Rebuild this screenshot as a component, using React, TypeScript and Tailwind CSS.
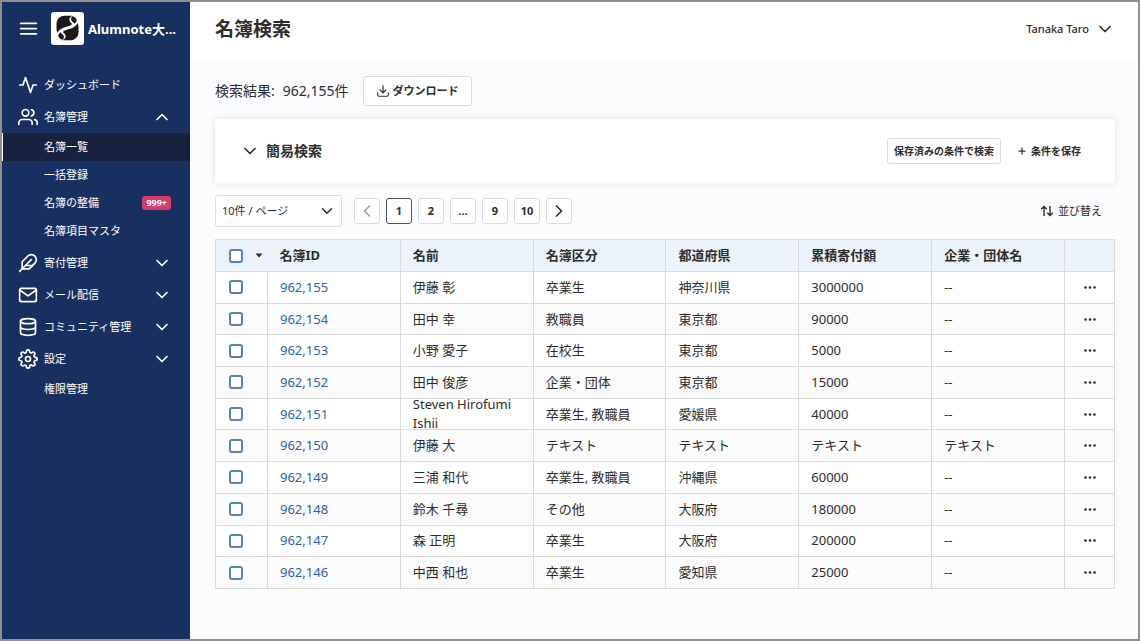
import type { ReactNode } from "react";
import {
  FiActivity,
  FiChevronDown,
  FiChevronLeft,
  FiChevronRight,
  FiChevronUp,
  FiDatabase,
  FiDownload,
  FiFeather,
  FiMail,
  FiMenu,
  FiPlus,
  FiSettings,
  FiUsers,
} from "react-icons/fi";
import type { IconType } from "react-icons";

interface SubItem {
  label: string;
  active?: boolean;
  badge?: string;
}

interface NavEntry {
  label: string;
  icon: IconType;
  chevron?: "up" | "down";
  children?: SubItem[];
}

const NAV: NavEntry[] = [
  { label: "ダッシュボード", icon: FiActivity },
  {
    label: "名簿管理",
    icon: FiUsers,
    chevron: "up",
    children: [
      { label: "名簿一覧", active: true },
      { label: "一括登録" },
      { label: "名簿の整備", badge: "999+" },
      { label: "名簿項目マスタ" },
    ],
  },
  { label: "寄付管理", icon: FiFeather, chevron: "down" },
  { label: "メール配信", icon: FiMail, chevron: "down" },
  { label: "コミュニティ管理", icon: FiDatabase, chevron: "down" },
  { label: "設定", icon: FiSettings, chevron: "down", children: [{ label: "権限管理" }] },
];

const HEADERS = ["名前", "名簿区分", "都道府県", "累積寄付額", "企業・団体名"];

const ROWS = [
  ["962,155", "伊藤 彰", "卒業生", "神奈川県", "3000000", "--"],
  ["962,154", "田中 幸", "教職員", "東京都", "90000", "--"],
  ["962,153", "小野 愛子", "在校生", "東京都", "5000", "--"],
  ["962,152", "田中 俊彦", "企業・団体", "東京都", "15000", "--"],
  ["962,151", "Steven Hirofumi Ishii", "卒業生, 教職員", "愛媛県", "40000", "--"],
  ["962,150", "伊藤 大", "テキスト", "テキスト", "テキスト", "テキスト"],
  ["962,149", "三浦 和代", "卒業生, 教職員", "沖縄県", "60000", "--"],
  ["962,148", "鈴木 千尋", "その他", "大阪府", "180000", "--"],
  ["962,147", "森 正明", "卒業生", "大阪府", "200000", "--"],
  ["962,146", "中西 和也", "卒業生", "愛知県", "25000", "--"],
];

export default function App() {
  return (
    <div className="flex min-h-screen border-2 border-[#8f8f8f] bg-[#fbfcfe] font-['Noto_Sans','Noto_Sans_CJK_JP',sans-serif] text-[#2d2d2d]">
      <Sidebar />
      <div className="min-w-0 flex-1">
        <header className="flex h-14 items-center justify-between bg-white pr-[23px] pb-0.5 pl-[25px]">
          <h1 className="text-[19px] leading-6 font-bold">名簿検索</h1>
          <button type="button" className="flex items-center gap-1.5 text-[11px] leading-4 font-medium">
            Tanaka Taro
            <FiChevronDown size={20} />
          </button>
        </header>

        <main className="pt-[18px] pr-[23px] pb-12 pl-[25px]">
          <div className="flex items-center gap-3.5">
            <p className="flex gap-2 text-[14px] leading-5">
              <span>検索結果:</span>
              <span>962,155件</span>
            </p>
            <button
              type="button"
              className="flex h-[30px] items-center gap-[3px] rounded-[3px] border border-[#dcdce0] bg-white px-3 text-[11px] leading-4 font-bold"
            >
              <FiDownload size={14} />
              ダウンロード
            </button>
          </div>

          <SearchPanel />
          <Toolbar />
          <RosterTable />
        </main>
      </div>
    </div>
  );
}

function Sidebar() {
  return (
    <aside className="w-[188px] shrink-0 bg-[#17305f] text-white">
      <div className="flex items-center gap-3 pt-2.5 pr-2 pl-4">
        <button type="button" aria-label="メニュー" className="shrink-0">
          <FiMenu size={21} />
        </button>
        <div className="flex items-center gap-1">
          <Logo />
          <span className="text-[13px] leading-5 font-bold whitespace-nowrap">Alumnote大...</span>
        </div>
      </div>
      <nav className="mt-6">
        <ul>
          {NAV.map((entry) => (
            <li key={entry.label}>
              <NavLink entry={entry} />
              {entry.children && (
                <ul className="pb-0.5">
                  {entry.children.map((child) => (
                    <li key={child.label}>
                      <SubLink item={child} />
                    </li>
                  ))}
                </ul>
              )}
            </li>
          ))}
        </ul>
      </nav>
    </aside>
  );
}

function NavLink({ entry }: { entry: NavEntry }) {
  const Icon = entry.icon;
  return (
    <a href="#" className="flex h-8 items-center pr-[18px] pl-4 text-[11px] leading-4">
      <Icon size={20} className="shrink-0" />
      <span className="ml-1.5 flex-1">{entry.label}</span>
      {entry.chevron === "up" && <FiChevronUp size={20} />}
      {entry.chevron === "down" && <FiChevronDown size={20} />}
    </a>
  );
}

function SubLink({ item }: { item: SubItem }) {
  return (
    <a
      href="#"
      className={`flex h-7 items-center justify-between border-l pr-[19px] pl-[41px] text-[11px] leading-4 ${
        item.active ? "border-white bg-[#18213f]" : "border-transparent"
      }`}
    >
      {item.label}
      {item.badge && (
        <span className="rounded-[3px] bg-[#d63d68] px-1 text-[9px] leading-[14px] font-bold">{item.badge}</span>
      )}
    </a>
  );
}

function SearchPanel() {
  return (
    <section className="mt-[13px] flex h-16 items-center rounded-[2px] bg-white pr-6 pl-[25px] shadow-[0_0_8px_rgba(40,40,90,0.12)]">
      <button type="button" className="flex items-center gap-1.5 text-[14px] leading-5 font-bold">
        <FiChevronDown size={20} />
        簡易検索
      </button>
      <div className="ml-auto flex items-center gap-1.5 text-[10px] leading-4 font-bold">
        <button type="button" className="h-[26px] rounded-[3px] border border-[#dcdce0] px-[6px]">
          保存済みの条件で検索
        </button>
        <button type="button" className="flex h-[26px] items-center gap-1 px-2.5">
          <FiPlus size={10} strokeWidth={3} />
          条件を保存
        </button>
      </div>
    </section>
  );
}

function Toolbar() {
  return (
    <div className="mt-3 flex items-center">
      <div className="relative">
        <select
          aria-label="表示件数"
          className="h-8 w-[127px] appearance-none rounded-[3px] border border-[#dcdce0] bg-white px-1.5 text-[11px] leading-4"
        >
          <option>10件 / ページ</option>
          <option>50件 / ページ</option>
        </select>
        <FiChevronDown size={18} className="pointer-events-none absolute top-[7px] right-1.5" />
      </div>

      <nav aria-label="ページ送り" className="ml-3 flex gap-1.5">
        <PageButton label="前へ" disabled>
          <FiChevronLeft size={20} />
        </PageButton>
        <PageButton current>1</PageButton>
        <PageButton>2</PageButton>
        <PageButton>...</PageButton>
        <PageButton>9</PageButton>
        <PageButton>10</PageButton>
        <PageButton label="次へ">
          <FiChevronRight size={20} />
        </PageButton>
      </nav>

      <button type="button" className="mr-[13px] ml-auto flex items-center gap-1 text-[11px] leading-4">
        <SortIcon />
        並び替え
      </button>
    </div>
  );
}

function PageButton({
  children,
  label,
  current,
  disabled,
}: {
  children: ReactNode;
  label?: string;
  current?: boolean;
  disabled?: boolean;
}) {
  return (
    <button
      type="button"
      aria-label={label}
      aria-current={current ? "page" : undefined}
      disabled={disabled}
      className={`flex h-[26px] w-[26px] items-center justify-center rounded-[3px] border bg-white text-[11px] leading-4 font-bold ${
        current ? "border-[#514b8c] text-[#2d2a78]" : "border-[#dcdce0]"
      } ${disabled ? "text-[#a0a0a0]" : ""}`}
    >
      {children}
    </button>
  );
}

function RosterTable() {
  return (
    <table className="mt-3 h-[350px] w-full table-fixed border-collapse border border-[#dadada] text-left text-[13px] leading-[19px]">
      <colgroup>
        <col className="w-[52px]" />
        <col span={6} />
        <col className="w-[50px]" />
      </colgroup>
      <thead>
        <tr className="h-8 bg-[#ecf3fb]">
          <th className="border-b border-[#dadada] p-0 pl-[13px]">
            <div className="flex items-center gap-3">
              <Checkbox label="すべて選択" />
              <svg viewBox="0 0 8 5" className="h-[5px] w-2" fill="currentColor" aria-hidden="true">
                <path d="M0.5 0.5h7L4 4.5z" />
              </svg>
            </div>
          </th>
          <th className="border-b border-[#dadada] p-0 pl-3 font-bold">名簿ID</th>
          {HEADERS.map((header) => (
            <th key={header} className="border border-[#dadada] p-0 pl-3 font-bold">
              {header}
            </th>
          ))}
          <th className="border border-[#dadada] p-0" />
        </tr>
      </thead>
      <tbody>
        {ROWS.map(([id, ...cells]) => (
          <tr key={id} className="bg-white even:bg-[#fbfbfb]">
            <td className="border border-[#dadada] p-0 pl-[13px]">
              <Checkbox label={`${id} を選択`} />
            </td>
            <td className="border border-[#dadada] p-0 pl-3">
              <a href="#" className="text-[#2a64ad]">
                {id}
              </a>
            </td>
            {cells.map((cell, i) => (
              <td key={i} className="border border-[#dadada] p-0 pr-3 pl-3">
                {/* long names wrap without growing the row */}
                <div className="flex h-5 items-center">{cell}</div>
              </td>
            ))}
            <td className="border border-[#dadada] p-0">
              <button type="button" aria-label="操作" className="flex w-full justify-center">
                <svg viewBox="0 0 12 3" className="h-[3px] w-3" fill="currentColor" aria-hidden="true">
                  <circle cx="1.5" cy="1.5" r="1.3" />
                  <circle cx="6" cy="1.5" r="1.3" />
                  <circle cx="10.5" cy="1.5" r="1.3" />
                </svg>
              </button>
            </td>
          </tr>
        ))}
      </tbody>
    </table>
  );
}

function Checkbox({ label }: { label: string }) {
  return (
    <input
      type="checkbox"
      aria-label={label}
      className="block h-3.5 w-3.5 appearance-none rounded-[3px] border-2 border-[#5585ba] bg-white checked:bg-[#5585ba]"
    />
  );
}

function SortIcon() {
  return (
    <svg viewBox="0 0 14 12" className="h-3 w-3.5" fill="none" stroke="currentColor" strokeWidth="1.4" aria-hidden="true">
      <path d="M4 11V1.5M1.2 4.3L4 1.5l2.8 2.8M10 1v9.5M7.2 7.7l2.8 2.8 2.8-2.8" />
    </svg>
  );
}

function Logo() {
  return (
    <svg viewBox="0 0 33 33" className="h-[33px] w-[33px] shrink-0" aria-hidden="true">
      <rect width="33" height="33" rx="3" fill="#fff" />
      {/* two interlocking drops split by an S-shaped band */}
      <path
        d="M5.500 16.500V12c0-5 3.500-8.300 8.500-8.300h7.500c-2.600 1.200-3.600 3-3 5 .5 1.500 2 2.300 2.600 3.300-1.200 2-4.600 2.400-8 3.500-3.300 1.100-5.600 2.800-6.600 5.500-.6-1.400-1-2.700-1-4.500z"
        fill="#1c1718"
      />
      <path
        d="M27.500 15.500V20c0 5-3.500 8.300-8.500 8.300h-7.500c2.600-1.200 3.600-3 3-5-.5-1.500-2-2.300-2.600-3.300 1.200-2 4.600-2.400 8-3.500 3.300-1.100 5.600-2.800 6.600-5.500.6 1.400 1 2.700 1 4.500z"
        fill="#1c1718"
      />
      <path
        d="M21.500 4.300c2.500.5 4 2 4.300 4.300-.5 1.600-1.400 2.500-2.600 3.200-.5-1.600-2.400-2.200-3-3.800-.4-1.400.1-2.700 1.300-3.700zM11.500 27.700c-2.500-.5-4-2-4.300-4.300.5-1.600 1.400-2.500 2.600-3.200.5 1.600 2.400 2.200 3 3.800.4 1.400-.1 2.700-1.300 3.700z"
        fill="#1c1718"
      />
    </svg>
  );
}
